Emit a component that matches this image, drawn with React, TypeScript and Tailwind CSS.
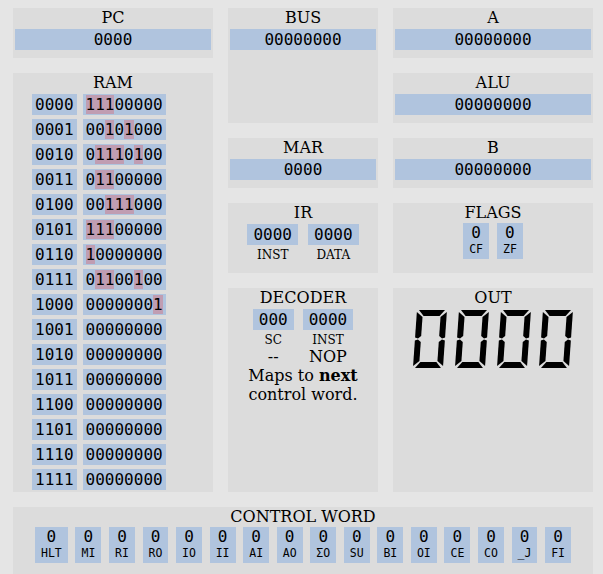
import React from "react";

const ram = [
  "11100000",
  "00101000",
  "01110100",
  "01100000",
  "00111000",
  "11100000",
  "10000000",
  "01100100",
  "00000001",
  "00000000",
  "00000000",
  "00000000",
  "00000000",
  "00000000",
  "00000000",
  "00000000",
];

const signals = ["HLT", "MI", "RI", "RO", "IO", "II", "AI", "AO", "ΣO", "SU", "BI", "OI", "CE", "CO", "_J", "FI"];

// segments a..f of one digit, g stays dark
const segs = [
  "2,0 28,0 23,6 7,6",
  "30,2 30,27.5 27,28.5 24,26 24,7",
  "30,30.5 30,56 24,51 24,32 27,29.5",
  "2,58 28,58 23,52 7,52",
  "0,30.5 3,29.5 6,32 6,51 0,56",
  "0,2 6,7 6,26 3,28.5 0,27.5",
];

function Panel({ title, className, children }: { title: string; className: string; children?: React.ReactNode }) {
  return (
    <div className={"bg-[#dcdcdc] flex flex-col items-center px-[2px] " + className}>
      <div className="leading-[19px] text-base">{title}</div>
      {children}
    </div>
  );
}

function Value({ v }: { v: string }) {
  return (
    <div className="mt-[2px] w-full bg-[#b0c4de] text-center font-['DejaVu_Sans_Mono',monospace] text-base leading-[19px] py-[1px]">
      {v}
    </div>
  );
}

function Bit({ label }: { label: string }) {
  return (
    <div className="bg-[#b0c4de] flex flex-col items-center px-[6px] pb-[3px] font-['DejaVu_Sans_Mono',monospace]">
      <span className="text-base leading-[19px]">0</span>
      <span className="text-[11.5px] leading-[14px]">{label}</span>
    </div>
  );
}

function Cell({ v, label }: { v: string; label: string }) {
  return (
    <div className="flex flex-col items-center">
      <div className="bg-[#b0c4de] px-[6px] py-[1px] leading-[19px] font-['DejaVu_Sans_Mono',monospace]">{v}</div>
      <div className="mt-[3px] text-[12px] leading-[14px]">{label}</div>
    </div>
  );
}

export default function App() {
  return (
    <div className="min-h-screen bg-[#e5e5e5] pt-[8px] pl-[13px] text-black font-['DejaVu_Serif',serif]">
      <div className="grid grid-cols-[200px_150px_200px] grid-rows-[50px_50px_50px_70px_204px_70px] gap-[15px] w-[580px]">
        <Panel title="PC" className="">
          <Value v="0000" />
        </Panel>
        <Panel title="BUS" className="row-span-2">
          <Value v="00000000" />
        </Panel>
        <Panel title="A" className="">
          <Value v="00000000" />
        </Panel>

        <Panel title="RAM" className="row-span-4">
          <div className="mt-[2px] self-start pl-[17px] flex flex-col gap-[4px] font-['DejaVu_Sans_Mono',monospace] text-base">
            {ram.map((d, i) => (
              <div key={i} className="flex gap-[6px]">
                <div className="bg-[#b0c4de] px-[3px] py-[1px] leading-[19px]">
                  {i.toString(2).padStart(4, "0")}
                </div>
                <div className="bg-[#b0c4de] px-[3px] py-[1px] leading-[19px]">
                  {d.split("").map((b, j) => (
                    <span key={j} className={b === "1" ? "bg-[#c09db2]" : ""}>
                      {b}
                    </span>
                  ))}
                </div>
              </div>
            ))}
          </div>
        </Panel>
        <Panel title="ALU" className="">
          <Value v="00000000" />
        </Panel>

        <Panel title="MAR" className="">
          <Value v="0000" />
        </Panel>
        <Panel title="B" className="">
          <Value v="00000000" />
        </Panel>

        <Panel title="IR" className="">
          <div className="mt-[2px] flex gap-[10px]">
            <Cell v="0000" label="INST" />
            <Cell v="0000" label="DATA" />
          </div>
        </Panel>
        <Panel title="FLAGS" className="">
          <div className="mt-[1px] flex gap-[8px]">
            <Bit label="CF" />
            <Bit label="ZF" />
          </div>
        </Panel>

        <Panel title="DECODER" className="">
          <div className="mt-[2px] flex gap-[9px]">
            <div className="flex flex-col items-center">
              <Cell v="000" label="SC" />
              <div className="leading-[19px]">--</div>
            </div>
            <div className="flex flex-col items-center">
              <Cell v="0000" label="INST" />
              <div className="leading-[19px]">NOP</div>
            </div>
          </div>
          <p className="text-center leading-[19px]">
            Maps to <b>next</b>
            <br />
            control word.
          </p>
        </Panel>
        <Panel title="OUT" className="">
          <svg width="160" height="58" viewBox="0 0 160 58" className="mt-[3px]">
            {[0, 1, 2, 3].map((i) => (
              <g key={i} transform={`translate(${i * 42 + 4} 0) skewX(-4)`}>
                {segs.map((p, k) => (
                  <polygon key={k} points={p} fill="#000" />
                ))}
              </g>
            ))}
          </svg>
        </Panel>

        <Panel title="CONTROL WORD" className="col-span-3">
          <div className="mt-[1px] flex gap-[7.7px]">
            {signals.map((s) => (
              <Bit key={s} label={s} />
            ))}
          </div>
        </Panel>
      </div>
    </div>
  );
}
